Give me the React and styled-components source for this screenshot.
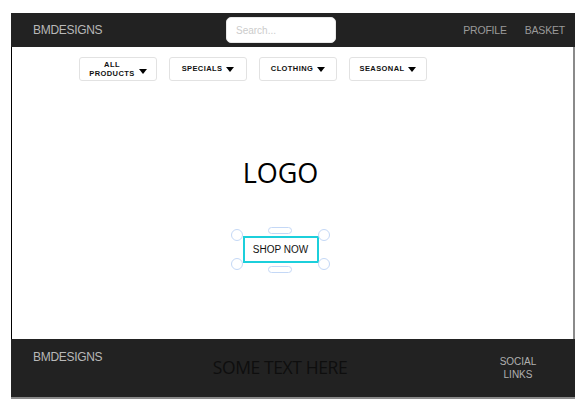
import React from 'react';
import styled, { createGlobalStyle } from 'styled-components';

const GlobalStyle = createGlobalStyle`
  body {
    margin: 0;
    background: #ffffff;
    font-family: 'Liberation Sans', Arial, sans-serif;
  }
`;

const Frame = styled.div`
  margin: 13px 0 0 11px;
  width: 564px;
  height: 386px;
  display: flex;
  flex-direction: column;
  box-sizing: border-box;
`;

const Header = styled.header`
  height: 34px;
  background: #222222;
  display: flex;
  align-items: center;
  padding: 0 10px 0 22px;
`;

const Brand = styled.div`
  color: #b8b8b8;
  font-size: 12px;
  letter-spacing: -0.3px;
  width: 193px;
`;

const Search = styled.input`
  width: 110px;
  height: 26px;
  box-sizing: border-box;
  border: 1px solid #e8e8e8;
  border-radius: 5px;
  background: #ffffff;
  padding: 0 9px;
  font-family: 'Liberation Sans', Arial, sans-serif;
  font-size: 10px;
  outline: none;
  &::placeholder {
    color: #cccccc;
  }
`;

const HeaderLinks = styled.nav`
  flex: 1;
  display: flex;
  justify-content: flex-end;
  gap: 18px;
`;

const HeaderLink = styled.span`
  color: #9a9a9a;
  font-size: 10.5px;
  letter-spacing: -0.2px;
`;

const Main = styled.main`
  flex: 1;
  border-left: 1px solid #000000;
  border-right: 2px solid #8a8a8a;
  padding-right: 24px;
  display: flex;
  flex-direction: column;
  align-items: center;
`;

const NavRow = styled.div`
  align-self: flex-start;
  margin: 10px 0 0 67px;
  display: flex;
  gap: 12px;
`;

const NavButton = styled.div`
  width: 78px;
  height: 24px;
  box-sizing: border-box;
  border: 1px solid #e2e2e2;
  border-radius: 3px;
  display: flex;
  align-items: center;
  justify-content: center;
  gap: 4px;
  font-size: 7.5px;
  font-weight: bold;
  letter-spacing: 0.4px;
  color: #111111;
`;

const NavLabel = styled.span`
  text-align: center;
  line-height: 8.5px;
  padding-top: ${p => (p.$two ? '1px' : '0')};
`;

const Caret = styled.span`
  width: 0;
  height: 0;
  border-left: 4px solid transparent;
  border-right: 4px solid transparent;
  border-top: 5px solid #000000;
  margin-top: ${p => (p.$low ? '4px' : '0')};
`;

const Logo = styled.h1`
  margin: 76px 0 0;
  font-family: 'Open Sans', sans-serif;
  font-weight: 400;
  font-size: 27px;
  line-height: 32px;
  color: #000000;
`;

const ButtonWrap = styled.div`
  position: relative;
  margin-top: 47px;
`;

const ShopButton = styled.button`
  width: 76px;
  height: 27px;
  box-sizing: border-box;
  border: 2px solid #1ccfdb;
  background: #ffffff;
  font-family: 'Liberation Sans', Arial, sans-serif;
  font-size: 10px;
  color: #111111;
  padding: 0;
`;

const Handle = styled.span`
  position: absolute;
  width: 12px;
  height: 12px;
  box-sizing: border-box;
  border: 1px solid #c4d8f6;
  border-radius: 50%;
  left: ${p => p.$x}px;
  top: ${p => p.$y}px;
`;

const Pill = styled.span`
  position: absolute;
  width: 24px;
  height: 7px;
  box-sizing: border-box;
  border: 1px solid #c4d8f6;
  border-radius: 4px;
  background: #ffffff;
  left: 25px;
  top: ${p => p.$y}px;
`;

const Footer = styled.footer`
  height: 58px;
  background: #222222;
  border-bottom: 2px solid #8a8a8a;
  display: flex;
  padding: 0 0 0 22px;
`;

const FooterBrand = styled.div`
  color: #b8b8b8;
  font-size: 12px;
  letter-spacing: -0.3px;
  padding-top: 11px;
  width: 150px;
`;

const FooterText = styled.div`
  flex: 1;
  text-align: center;
  font-family: 'Open Sans', sans-serif;
  font-size: 17.5px;
  color: #0e0e0e;
  padding: 16px 89px 0 0;
  letter-spacing: -0.4px;
`;

const Social = styled.div`
  width: 104px;
  text-align: center;
  color: #b0b0b0;
  font-size: 10px;
  line-height: 13px;
  padding-top: 16px;
  margin-right: 5px;
`;

export default function App() {
  const navs = ['ALL PRODUCTS', 'SPECIALS', 'CLOTHING', 'SEASONAL'];
  return (
    <>
      <GlobalStyle />
      <Frame>
        <Header>
          <Brand>BMDESIGNS</Brand>
          <Search placeholder="Search..." />
          <HeaderLinks>
            <HeaderLink>PROFILE</HeaderLink>
            <HeaderLink>BASKET</HeaderLink>
          </HeaderLinks>
        </Header>
        <Main>
          <NavRow>
            {navs.map(n => (
              <NavButton key={n}>
                {n === 'ALL PRODUCTS' ? (
                  <NavLabel $two>
                    ALL
                    <br />
                    PRODUCTS
                  </NavLabel>
                ) : (
                  <NavLabel>{n}</NavLabel>
                )}
                <Caret $low={n === 'ALL PRODUCTS'} />
              </NavButton>
            ))}
          </NavRow>
          <Logo>LOGO</Logo>
          <ButtonWrap>
            <ShopButton>SHOP NOW</ShopButton>
            <Handle $x={-12} $y={-7} />
            <Handle $x={75} $y={-7} />
            <Handle $x={-12} $y={22} />
            <Handle $x={75} $y={22} />
            <Pill $y={-9} />
            <Pill $y={30} />
          </ButtonWrap>
        </Main>
        <Footer>
          <FooterBrand>BMDESIGNS</FooterBrand>
          <FooterText>SOME TEXT HERE</FooterText>
          <Social>
            SOCIAL
            <br />
            LINKS
          </Social>
        </Footer>
      </Frame>
    </>
  );
}
